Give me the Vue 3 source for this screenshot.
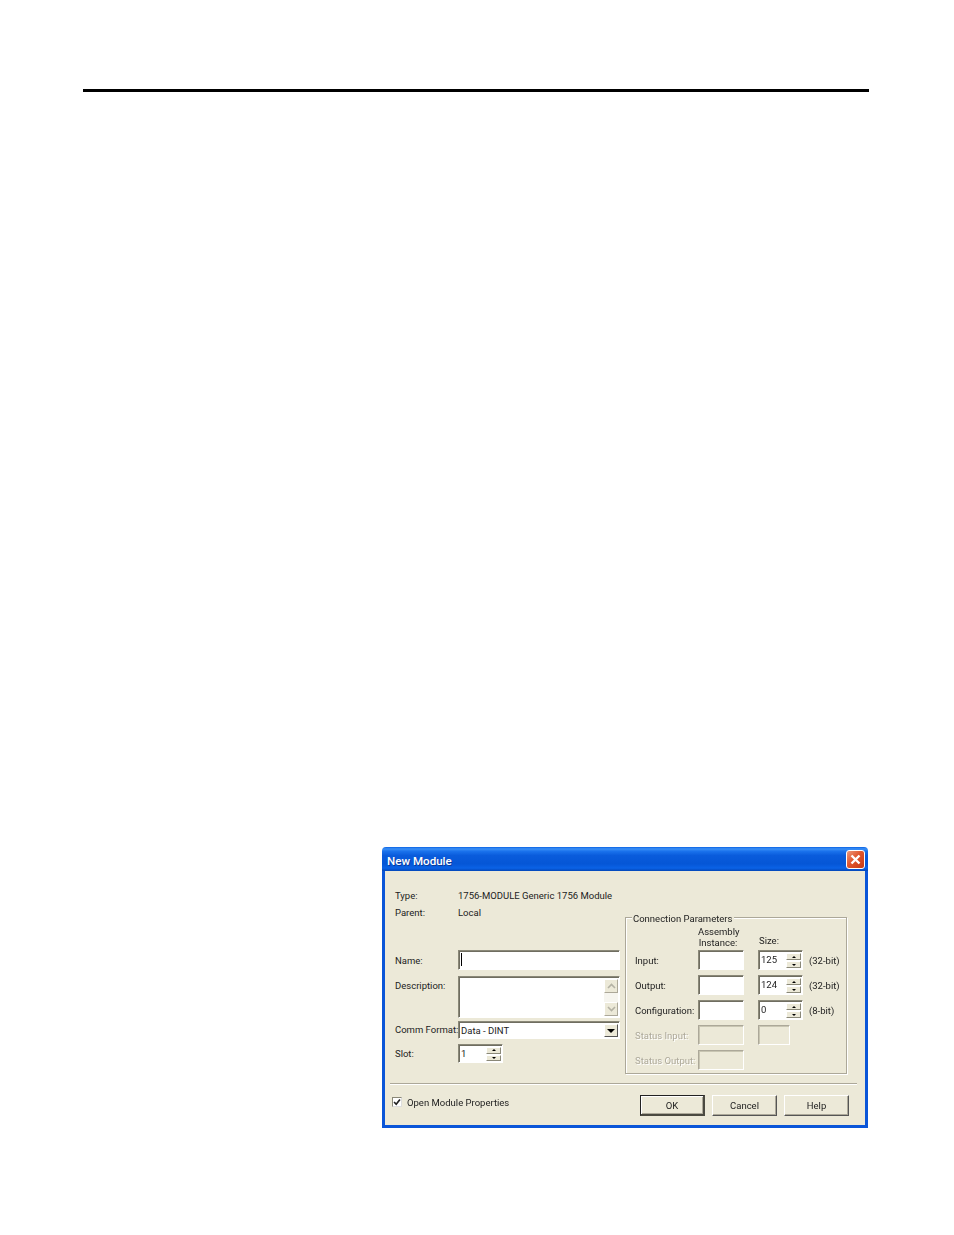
<script setup>
const leftInfo = [
  { label: 'Type:', value: '1756-MODULE Generic 1756 Module' },
  { label: 'Parent:', value: 'Local' },
]

const connRows = [
  { label: 'Input:', size: '125', unit: '(32-bit)' },
  { label: 'Output:', size: '124', unit: '(32-bit)' },
  { label: 'Configuration:', size: '0', unit: '(8-bit)' },
]

const statusRows = [
  { label: 'Status Input:', second: true },
  { label: 'Status Output:', second: false },
]

const buttons = [
  { text: 'OK', primary: true },
  { text: 'Cancel', primary: false },
  { text: 'Help', primary: false },
]
</script>

<template>
  <div class="page">
    <div class="top-rule"></div>

    <div class="dialog">
      <div class="titlebar">
        <span class="title">New Module</span>
        <span class="close">
          <svg width="13" height="13" viewBox="0 0 13 13">
            <path d="M2.5 2.5 L10.5 10.5 M10.5 2.5 L2.5 10.5" stroke="#fff" stroke-width="2.4" fill="none" />
          </svg>
        </span>
      </div>

      <div class="dialog-body">
        <div class="main">
          <div class="left-col">
            <div v-for="row in leftInfo" :key="row.label" class="info-row">
              <span class="label">{{ row.label }}</span>
              <span>{{ row.value }}</span>
            </div>

            <div class="form-row name-row">
              <span class="label">Name:</span>
              <div class="field name-field"><span class="caret"></span></div>
            </div>

            <div class="form-row desc-row">
              <span class="label desc-label">Description:</span>
              <div class="field desc-field">
                <div class="scrollbar">
                  <span class="scroll-btn">
                    <svg width="9" height="6" viewBox="0 0 9 6"><path d="M1 5 L4.5 1.5 L8 5" stroke="#b4b2a4" stroke-width="1.6" fill="none" /></svg>
                  </span>
                  <span class="scroll-btn">
                    <svg width="9" height="6" viewBox="0 0 9 6"><path d="M1 1 L4.5 4.5 L8 1" stroke="#b4b2a4" stroke-width="1.6" fill="none" /></svg>
                  </span>
                </div>
              </div>
            </div>

            <div class="form-row comm-row">
              <span class="label">Comm Format:</span>
              <div class="field combo">
                <span>Data - DINT</span>
                <span class="combo-btn">
                  <svg width="8" height="4" viewBox="0 0 8 4"><path d="M0 0 H8 L4 4 Z" fill="#000" /></svg>
                </span>
              </div>
            </div>

            <div class="form-row slot-row">
              <span class="label">Slot:</span>
              <div class="field spin slot-field">
                <span>1</span>
                <span class="spin-btns">
                  <span class="spin-btn"><i class="up"></i></span>
                  <span class="spin-btn"><i class="down"></i></span>
                </span>
              </div>
            </div>
          </div>

          <div class="group">
            <span class="legend">Connection Parameters</span>
            <div class="group-grid">
              <span></span>
              <span class="head-instance">Assembly<br />Instance:</span>
              <span class="head-size">Size:</span>
              <span></span>

              <template v-for="row in connRows" :key="row.label">
                <span class="row-label">{{ row.label }}</span>
                <div class="field conn-field"></div>
                <div class="field spin conn-field">
                  <span>{{ row.size }}</span>
                  <span class="spin-btns">
                    <span class="spin-btn"><i class="up"></i></span>
                    <span class="spin-btn"><i class="down"></i></span>
                  </span>
                </div>
                <span class="row-label">{{ row.unit }}</span>
              </template>

              <template v-for="row in statusRows" :key="row.label">
                <span class="row-label disabled-text">{{ row.label }}</span>
                <div class="field conn-field disabled"></div>
                <div v-if="row.second" class="field conn-field disabled short"></div>
                <span v-else></span>
                <span></span>
              </template>
            </div>
          </div>
        </div>

        <div class="divider"></div>

        <div class="footer">
          <label class="check">
            <span class="check-box">
              <svg width="8" height="8" viewBox="0 0 9 9"><path d="M1.2 4.5 L3.6 7 L7.8 1.6" stroke="#222" stroke-width="1.9" fill="none" /></svg>
            </span>
            Open Module Properties
          </label>
          <div class="buttons">
            <button
              v-for="btn in buttons"
              :key="btn.text"
              type="button"
              class="btn"
              :class="{ primary: btn.primary }"
            >
              {{ btn.text }}
            </button>
          </div>
        </div>
      </div>
    </div>
  </div>
</template>

<style>
html,
body {
  background: #fff;
}
</style>

<style scoped>
.page {
  height: 1235px;
  padding-top: 89px;
  box-sizing: border-box;
  font-family: Roboto, 'Liberation Sans', Arial, sans-serif;
  font-size: 9.5px;
  color: #222;
  white-space: nowrap;
}

.top-rule {
  width: 786px;
  height: 3px;
  margin-left: 83px;
  background: #000;
}

.dialog {
  width: 486px;
  height: 281px;
  margin: 755px 0 0 382px;
  display: flex;
  flex-direction: column;
  box-sizing: border-box;
  border-radius: 4px 4px 0 0;
  overflow: hidden;
  filter: blur(0.35px);
}

.titlebar {
  height: 24px;
  flex: none;
  display: flex;
  align-items: center;
  justify-content: space-between;
  padding: 0 3px 0 5px;
  background: linear-gradient(180deg, #0a62e4 0%, #3b90f6 8%, #1a72ec 18%, #0a5cdc 35%, #0556d6 70%, #0a62e6 88%, #0346b8 100%);
}

.title {
  margin-top: 3px;
  color: #fff;
  font-size: 11.6px;
  font-weight: 500;
  text-shadow: 1px 1px 0 #0a3a9a;
}

.close {
  width: 17px;
  height: 17px;
  display: flex;
  align-items: center;
  justify-content: center;
  border: 1px solid #fff;
  border-radius: 3px;
  background: linear-gradient(135deg, #ec9a7c 0%, #e0562e 45%, #c83a14 100%);
}

.dialog-body {
  flex: 1;
  background: #ece9d8;
  border: 3px solid #0a55d8;
  border-top: none;
}

.main {
  display: flex;
  height: 203px;
}

.left-col {
  width: 225px;
  margin-left: 10px;
  padding-top: 16px;
}

.info-row {
  display: flex;
  height: 17px;
  line-height: 17px;
}

.label {
  width: 63px;
  flex: none;
}

.form-row {
  display: flex;
  line-height: 21px;
}

.name-row {
  margin-top: 29px;
  height: 20px;
}

.desc-row {
  margin-top: 6px;
  height: 42px;
}

.desc-label {
  line-height: 20px;
}

.comm-row {
  margin-top: 3px;
  height: 18px;
  line-height: 18px;
}

.slot-row {
  margin-top: 5px;
  height: 19px;
  line-height: 19px;
}

.field {
  position: relative;
  box-sizing: border-box;
  background: #fff;
  border: 1px solid #fff;
  border-top-color: #8a8878;
  border-left-color: #8a8878;
  box-shadow: inset 1px 1px 0 #6f6d60;
}

.name-field,
.desc-field,
.combo {
  width: 162px;
}

.caret {
  display: block;
  width: 1px;
  height: 13px;
  margin: 2px 0 0 2px;
  background: #000;
}

.desc-field {
  display: flex;
  justify-content: flex-end;
  padding: 2px 1px 1px 0;
}

.scrollbar {
  width: 14px;
  display: flex;
  flex-direction: column;
  justify-content: space-between;
  background: #f6f5ef;
}

.scroll-btn {
  height: 14px;
  display: flex;
  align-items: center;
  justify-content: center;
  box-sizing: border-box;
  background: #ece9d8;
  border: 1px solid #fff;
  border-right-color: #aca899;
  border-bottom-color: #aca899;
}

.combo {
  display: flex;
  justify-content: space-between;
  padding: 2px 1px 1px 2px;
  line-height: 14px;
}

.combo-btn {
  width: 14px;
  display: flex;
  align-items: center;
  justify-content: center;
  box-sizing: border-box;
  background: #ece9d8;
  border: 1px solid #fff;
  border-right-color: #555;
  border-bottom-color: #555;
}

.spin {
  display: flex;
  justify-content: space-between;
  padding: 2px 1px 1px 2px;
  line-height: 13px;
}

.slot-field {
  width: 45px;
}

.spin-btns {
  width: 15px;
  display: flex;
  flex-direction: column;
  gap: 1px;
}

.spin-btn {
  flex: 1;
  display: flex;
  align-items: center;
  justify-content: center;
  box-sizing: border-box;
  background: #ece9d8;
  border: 1px solid #fff;
  border-right-color: #8a8878;
  border-bottom-color: #8a8878;
}

.spin-btn i {
  width: 0;
  height: 0;
  border-left: 2px solid transparent;
  border-right: 2px solid transparent;
}

.spin-btn .up {
  border-bottom: 2px solid #000;
}

.spin-btn .down {
  border-top: 2px solid #000;
}

.group {
  position: relative;
  width: 222px;
  height: 157px;
  margin: 46px 0 0 5px;
  box-sizing: border-box;
  padding: 2px 0 3px 9px;
  border: 1px solid #aca899;
  box-shadow: 1px 1px 0 #fff, inset 1px 1px 0 #fff;
}

.legend {
  position: absolute;
  top: -5px;
  left: 6px;
  padding: 0 1px;
  line-height: 12px;
  background: #ece9d8;
}

.group-grid {
  display: grid;
  grid-template-columns: 63px 60px 51px auto;
  grid-template-rows: 30px repeat(4, 25px) 20px;
  align-items: start;
}

.head-instance {
  align-self: end;
  width: 40px;
  line-height: 11px;
  padding-bottom: 2px;
  text-align: center;
}

.head-size {
  align-self: end;
  line-height: 11px;
  padding: 0 0 4px 1px;
}

.row-label {
  line-height: 21px;
}

.conn-field {
  height: 20px;
  width: 46px;
}

.spin.conn-field {
  width: 45px;
}

.short {
  width: 32px;
}

.disabled {
  background: #ece9d8;
  border-color: #fff;
  border-top-color: #aca899;
  border-left-color: #aca899;
  box-shadow: inset 1px 1px 0 #c8c5b2;
}

.disabled-text {
  color: #aca899;
  text-shadow: 1px 1px 0 #fff;
}

.divider {
  width: 467px;
  height: 1px;
  margin: 9px 0 0 5px;
  background: #aca899;
  box-shadow: 0 1px 0 #fff;
}

.footer {
  display: flex;
  justify-content: space-between;
  margin-top: 11px;
  padding: 0 16px 0 7px;
}

.check {
  display: flex;
  gap: 5px;
  height: 12px;
  margin-top: 2px;
  line-height: 11px;
}

.check-box {
  width: 10px;
  height: 10px;
  box-sizing: border-box;
  display: flex;
  align-items: center;
  justify-content: center;
  background: #fff;
  border: 1px solid #8a8878;
  border-right-color: #ddd;
  border-bottom-color: #ddd;
}

.buttons {
  display: flex;
  gap: 7px;
}

.btn {
  width: 65px;
  height: 21px;
  padding: 0;
  font: inherit;
  color: #222;
  background: #ece9d8;
  border: 1px solid #fff;
  border-right-color: #555;
  border-bottom-color: #555;
  box-shadow: inset -1px -1px 0 #aca899;
}

.btn.primary {
  border: 1px solid #222;
  border-right-width: 2px;
  border-bottom-width: 2px;
  border-right-color: #4a4940;
  border-bottom-color: #4a4940;
  box-shadow: inset 1px 1px 0 #fff, inset -1px -1px 0 #aca899;
}
</style>
